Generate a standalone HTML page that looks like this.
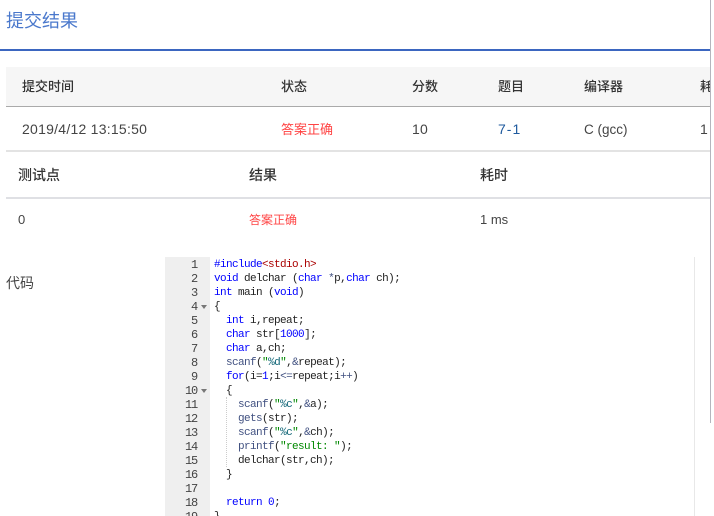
<!DOCTYPE html>
<html><head><meta charset="utf-8"><style>
html,body{margin:0;padding:0;background:#fff;overflow:hidden}
body{width:714px;height:516px;position:relative;font-family:"Liberation Sans","Noto Sans CJK SC",sans-serif;color:#444;font-size:13px}
.a{position:absolute;white-space:nowrap;line-height:18px}
.b{position:absolute}
.h{font-weight:500;color:#333}
.l{font-size:14px;letter-spacing:.25px}
.code{position:absolute;left:214px;font:11px/14px "Liberation Mono",monospace;letter-spacing:-.6px;color:#222;white-space:pre;height:14px}
.n{position:absolute;left:165px;width:32px;text-align:right;font:12px/14px "Liberation Mono",monospace;letter-spacing:-1.2px;color:#444;height:14px}
i{font-style:normal;color:#00f}s{text-decoration:none;color:#a00}u{text-decoration:none;color:#405080}b{font-weight:normal;color:#167}
em{font-style:normal;color:#080}
</style></head><body>
<div class="a" style="left:6px;top:9px;font-size:18px;line-height:24px;color:#4a78cc">提交结果</div>
<div class="b" style="left:0;top:49px;width:710px;height:2px;background:#3b66c0"></div>
<div class="b" style="left:710px;top:0;width:1px;height:423px;background:#b5b5bd"></div>
<div class="b" style="left:6px;top:67px;width:704px;height:39px;background:#f6f6f6"></div>
<div class="b" style="left:6px;top:106px;width:704px;height:1px;background:#aaa"></div>
<div class="b" style="left:6px;top:150px;width:704px;height:2px;background:#e3e3e3"></div>
<div class="a h" style="left:22px;top:78px">提交时间</div>
<div class="a h" style="left:281px;top:78px">状态</div>
<div class="a h" style="left:412px;top:78px">分数</div>
<div class="a h" style="left:498px;top:78px">题目</div>
<div class="a h" style="left:584px;top:78px">编译器</div>
<div class="a h" style="left:700px;top:78px;width:10px;overflow:hidden">耗时</div>
<div class="a l" style="left:22px;top:120px;letter-spacing:.25px">2019/4/12 13:15:50</div>
<div class="a" style="left:281px;top:121px;color:#f44">答案正确</div>
<div class="a l" style="left:412px;top:120px">10</div>
<div class="a l" style="left:498px;top:120px;color:#1f5a9e;letter-spacing:1px">7-1</div>
<div class="a" style="left:584px;top:121px;font-size:13.5px">C (gcc)</div>
<div class="a l" style="left:700px;top:120px;width:10px;overflow:hidden">1 ms</div>
<div class="a h" style="left:18px;top:166px;font-size:14px">测试点</div>
<div class="a h" style="left:249px;top:166px;font-size:14px">结果</div>
<div class="a h" style="left:480px;top:166px;font-size:14px">耗时</div>
<div class="b" style="left:6px;top:197px;width:704px;height:2px;background:#dfe0e4"></div>
<div class="a" style="left:18px;top:211px;font-size:13px">0</div>
<div class="a" style="left:249px;top:211px;font-size:12px;color:#f44">答案正确</div>
<div class="a" style="left:480px;top:211px;font-size:13px">1 ms</div>
<div class="a" style="left:6px;top:274px;font-size:14px">代码</div>
<div class="b" style="left:165px;top:257px;width:45px;height:259px;background:#efefef"></div>
<div class="b" style="left:694px;top:257px;width:1px;height:259px;background:#e8e8e8"></div>
<div class="b" style="left:226px;top:397px;width:1px;height:70px;border-left:1px dotted #ccc"></div>
<div class="n" style="top:258px">1</div><div class="n" style="top:272px">2</div><div class="n" style="top:286px">3</div><div class="n" style="top:300px">4</div><div class="n" style="top:314px">5</div><div class="n" style="top:328px">6</div><div class="n" style="top:342px">7</div><div class="n" style="top:356px">8</div><div class="n" style="top:370px">9</div><div class="n" style="top:384px">10</div><div class="n" style="top:398px">11</div><div class="n" style="top:412px">12</div><div class="n" style="top:426px">13</div><div class="n" style="top:440px">14</div><div class="n" style="top:454px">15</div><div class="n" style="top:468px">16</div><div class="n" style="top:482px">17</div><div class="n" style="top:496px">18</div><div class="n" style="top:510px">19</div>
<div class="b" style="left:201px;top:305px;border:3px solid transparent;border-top:4px solid #777;border-bottom:0"></div>
<div class="b" style="left:201px;top:389px;border:3px solid transparent;border-top:4px solid #777;border-bottom:0"></div>
<div class="code" style="top:258px"><i>#include</i><s>&lt;stdio.h&gt;</s></div>
<div class="code" style="top:272px"><i>void</i> delchar (<i>char</i> <u>*</u>p,<i>char</i> ch);</div>
<div class="code" style="top:286px"><i>int</i> main (<i>void</i>)</div>
<div class="code" style="top:300px">{</div>
<div class="code" style="top:314px">  <i>int</i> i,repeat;</div>
<div class="code" style="top:328px">  <i>char</i> str[<i>1000</i>];</div>
<div class="code" style="top:342px">  <i>char</i> a,ch;</div>
<div class="code" style="top:356px">  <u>scanf</u>(<em>"</em><b>%d</b><em>"</em>,<u>&amp;</u>repeat);</div>
<div class="code" style="top:370px">  <i>for</i>(i=<i>1</i>;i<u>&lt;=</u>repeat;i<u>++</u>)</div>
<div class="code" style="top:384px">  {</div>
<div class="code" style="top:398px">    <u>scanf</u>(<em>"</em><b>%c</b><em>"</em>,<u>&amp;</u>a);</div>
<div class="code" style="top:412px">    <u>gets</u>(str);</div>
<div class="code" style="top:426px">    <u>scanf</u>(<em>"</em><b>%c</b><em>"</em>,<u>&amp;</u>ch);</div>
<div class="code" style="top:440px">    <u>printf</u>(<em>"result: "</em>);</div>
<div class="code" style="top:454px">    delchar(str,ch);</div>
<div class="code" style="top:468px">  }</div>
<div class="code" style="top:496px">  <i>return</i> <i>0</i>;</div>
<div class="code" style="top:510px">}</div>
</body></html>
